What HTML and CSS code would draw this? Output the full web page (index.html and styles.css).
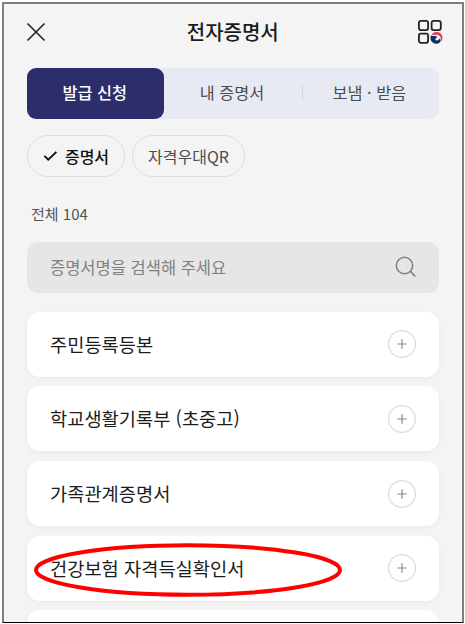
FILE: index.html
```html
<!DOCTYPE html>
<html lang="ko">
<head>
    <meta charset="UTF-8">
    <meta name="viewport" content="width=device-width, initial-scale=1.0">
    <title>전자증명서</title>
    <link rel="stylesheet" href="styles.css">
</head>
<body>
    <div class="screen">
        <header class="header">
            <svg class="close-icon" viewBox="0 0 20 20">
                <path d="M1.5 1.5 18.5 18.5M18.5 1.5 1.5 18.5"/>
            </svg>
            <h1>전자증명서</h1>
            <svg class="menu-icon" viewBox="0 0 26 26">
                <g fill="none" stroke="#222" stroke-width="1.8">
                    <rect x="1.9" y="1.9" width="9.2" height="9.2" rx="2"/>
                    <rect x="14.6" y="1.9" width="9.2" height="9.2" rx="2"/>
                    <rect x="1.9" y="14.6" width="9.2" height="9.2" rx="2"/>
                </g>
                <path d="M14.8 15.6A5.8 5.8 0 1 1 23.6 23C24.3 20.6 24.1 18.4 22.2 17.2C19.6 15.4 17 17.6 14.8 15.6Z" fill="#e23a52"/>
                <path d="M16.2 16.4C18.3 15.6 21.2 15.4 22.7 17.3C24.1 19.3 23.3 21.5 21.5 22.6L18.5 20.5Z" fill="#f5f5f5"/>
                <path d="M14.2 16.2C13 18.2 13.2 20.9 14.8 22.8C17 25.4 21.2 25.5 23.3 22.7C24 21.7 23.6 20.2 22.6 19.6C21.8 21.1 20.4 21.8 19.1 21.2C17.8 20.5 18.4 19.3 19.3 18.9C20.1 18.5 20 17.4 19 17.1C17.4 16.6 15.7 17.6 14.2 16.2Z" fill="#0b326b"/>
            </svg>
        </header>

        <nav class="tabs">
            <div class="tab active">발급 신청</div>
            <div class="tab">내 증명서</div>
            <div class="tab divided">보냄 · 받음</div>
        </nav>

        <div class="chips">
            <div class="chip selected">
                <svg class="check-icon" viewBox="0 0 16 12">
                    <path d="M1.5 5.8 5.6 10 14.3 1.6"/>
                </svg>
                <span>증명서</span>
            </div>
            <div class="chip">자격우대QR</div>
        </div>

        <p class="count">전체 104</p>

        <div class="search">
            <span>증명서명을 검색해 주세요</span>
            <svg class="search-icon" viewBox="0 0 22 22">
                <circle cx="9.5" cy="9.5" r="8.2"/>
                <path d="M15.3 15.3 20.2 20.4"/>
            </svg>
        </div>

        <ul class="list">
            <li class="card">
                <span>주민등록등본</span>
                <svg class="plus-icon" viewBox="0 0 28 28"><circle cx="14" cy="14" r="13.4"/><path d="M9.3 14h9.4M14 9.3v9.4"/></svg>
            </li>
            <li class="card">
                <span>학교생활기록부 (초중고)</span>
                <svg class="plus-icon" viewBox="0 0 28 28"><circle cx="14" cy="14" r="13.4"/><path d="M9.3 14h9.4M14 9.3v9.4"/></svg>
            </li>
            <li class="card">
                <span>가족관계증명서</span>
                <svg class="plus-icon" viewBox="0 0 28 28"><circle cx="14" cy="14" r="13.4"/><path d="M9.3 14h9.4M14 9.3v9.4"/></svg>
            </li>
            <li class="card">
                <span>건강보험 자격득실확인서</span>
                <svg class="plus-icon" viewBox="0 0 28 28"><circle cx="14" cy="14" r="13.4"/><path d="M9.3 14h9.4M14 9.3v9.4"/></svg>
                <!-- red marker around the certificate name -->
                <svg class="marker" viewBox="0 0 310 56"><ellipse cx="155" cy="28" rx="152" ry="24.7"/></svg>
            </li>
            <li class="card"></li>
        </ul>
    </div>
</body>
</html>
```

FILE: styles.css
```css
* {
    margin: 0;
    padding: 0;
    box-sizing: border-box;
}

body {
    height: 624px;
    padding: 2px 1px 1px 2px;
    background-color: #ffffff;
    font-family: 'Noto Sans CJK KR', sans-serif;
    overflow: hidden;
}

.screen {
    height: 621px;
    padding: 0 23px;
    background-color: #f4f4f4;
    border: 2px solid #7f7f7f;
    border-bottom: 1px solid #000000;
    overflow: hidden;
}

.header {
    display: flex;
    align-items: center;
    justify-content: space-between;
    height: 56px;
    margin-bottom: 7.5px;
}

.header h1 {
    font-size: 20px;
    font-weight: 500;
    line-height: 28px;
    color: #1c1c1c;
}

.close-icon {
    width: 20px;
    height: 20px;
    margin-left: -1px;
    margin-right: 3px;
    fill: none;
    stroke: #222222;
    stroke-width: 1.6;
}

.menu-icon {
    width: 26px;
    height: 26px;
    margin-right: -3.5px;
}

.tabs {
    display: flex;
    height: 51.5px;
    background-color: #e7eaf3;
    border-radius: 9px;
}

.tab {
    flex: 1;
    display: flex;
    align-items: center;
    justify-content: center;
    position: relative;
    padding: 0 2px 2px 0;
    font-size: 16.3px;
    color: #4c4c4c;
}

.tab.active {
    background-color: #2e2d6b;
    border-radius: 9px;
    color: #ffffff;
    font-weight: 500;
}

.tab.divided::before {
    content: '';
    position: absolute;
    left: 0;
    width: 1px;
    height: 17px;
    background-color: #d5d8e1;
}

.chips {
    display: flex;
    gap: 7px;
    margin-top: 16px;
}

.chip {
    display: flex;
    align-items: center;
    justify-content: center;
    gap: 7px;
    width: 113px;
    height: 42px;
    padding-bottom: 1px;
    border: 1.5px solid #dedede;
    border-radius: 21px;
    font-size: 16px;
    color: #4c4c4c;
}

.chip.selected {
    width: 98px;
    color: #111111;
    font-weight: 500;
}

.check-icon {
    width: 15px;
    height: 12px;
    fill: none;
    stroke: #111111;
    stroke-width: 2;
}

.count {
    margin: 26px 0 17.5px 4px;
    font-size: 15px;
    line-height: 21px;
    color: #555555;
}

.search {
    display: flex;
    align-items: center;
    justify-content: space-between;
    height: 51.5px;
    padding: 0 22.5px 0 23px;
    background-color: #e6e6e6;
    border-radius: 11px;
    font-size: 16.5px;
    color: #808080;
}

.search-icon {
    width: 22px;
    height: 22px;
    fill: none;
    stroke: #828282;
    stroke-width: 1.6;
}

.list {
    display: flex;
    flex-direction: column;
    gap: 9.7px;
    margin-top: 18.7px;
    list-style: none;
}

.card {
    flex: none;
    display: flex;
    align-items: center;
    justify-content: space-between;
    position: relative;
    height: 65px;
    padding: 0 23px;
    background-color: #ffffff;
    border-radius: 13px;
    box-shadow: 0 2px 6px rgba(0, 0, 0, 0.04);
    font-size: 18.7px;
    color: #1c1c1c;
}

.card span {
    padding-bottom: 2px;
}

.plus-icon {
    width: 28px;
    height: 28px;
    fill: none;
    stroke: #dddddd;
    stroke-width: 1.2;
}

.plus-icon path {
    stroke: #8a8a8a;
}

.marker {
    position: absolute;
    left: 6px;
    top: 6.5px;
    width: 310px;
    height: 56px;
    fill: none;
    stroke: #ff0000;
    stroke-width: 4;
}
```
